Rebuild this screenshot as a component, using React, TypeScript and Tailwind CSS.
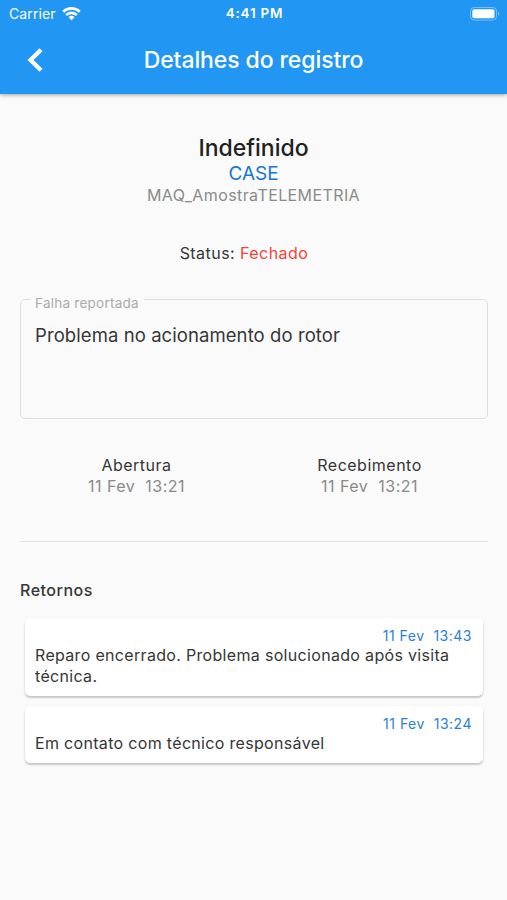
interface Feedback {
  date: string;
  message: string;
}

const feedbacks: Feedback[] = [
  { date: '11 Fev  13:43', message: 'Reparo encerrado. Problema solucionado após visita técnica.' },
  { date: '11 Fev  13:24', message: 'Em contato com técnico responsável' },
];

const dates = [
  { label: 'Abertura', value: '11 Fev  13:21' },
  { label: 'Recebimento', value: '11 Fev  13:21' },
];

function WifiIcon() {
  return (
    <svg width="19" height="14" viewBox="0 0 19 14" fill="none" stroke="currentColor" strokeWidth="2.6">
      <path d="M1.2 4.7a12 12 0 0 1 16.6 0" />
      <path d="M4.2 8a7.6 7.6 0 0 1 10.6 0" />
      <path d="M9.5 13.3 6.5 10.3a4.3 4.3 0 0 1 6 0Z" fill="currentColor" stroke="none" />
    </svg>
  );
}

function BatteryIcon() {
  return (
    <svg width="30" height="14" viewBox="0 0 30 14" fill="none">
      <rect x="0.5" y="0.5" width="26" height="12.6" rx="3.8" stroke="white" strokeOpacity="0.4" />
      <rect x="2.3" y="2.3" width="22.2" height="9" rx="1.8" fill="white" />
      <path d="M28 4.8c1.6.6 1.6 3.4 0 4Z" fill="white" fillOpacity="0.45" />
    </svg>
  );
}

function Header() {
  return (
    <header className="relative z-10 h-[94px] bg-[#2196f3] text-white shadow-[0_1px_4px_rgba(0,0,0,0.35)]">
      {/* Status bar */}
      <div className="grid h-[27px] grid-cols-3 items-center pl-[9px] pr-[7px]">
        <div className="flex items-center gap-[6px]">
          <span className="text-[14px] tracking-[0.1px]">Carrier</span>
          <WifiIcon />
        </div>
        <span className="text-center text-[13.5px] font-semibold tracking-[0.8px]">4:41 PM</span>
        <div className="flex justify-end">
          <BatteryIcon />
        </div>
      </div>
      {/* App bar */}
      <div className="grid h-[66px] grid-cols-[72px_1fr_72px] items-center">
        <button className="flex justify-center pr-[2px]" aria-label="Voltar">
          <svg width="16" height="24" viewBox="0 0 16 24" fill="none" stroke="currentColor" strokeWidth="4.2">
            <path d="M14 1.7 3.5 12 14 22.3" />
          </svg>
        </button>
        <h1 className="text-center text-[23px] font-medium tracking-[-0.1px]">Detalhes do registro</h1>
      </div>
    </header>
  );
}

function FeedbackCard({ date, message }: Feedback) {
  return (
    <div className="rounded-[5px] bg-white px-[10px] pt-[8px] pb-[9px] shadow-[0_2px_2px_rgba(0,0,0,0.2),0_0_3px_rgba(0,0,0,0.06)]">
      <p className="pr-px text-right text-[14px] leading-[19px] tracking-[0.5px] whitespace-pre text-[#2a7fd6]">{date}</p>
      <p className="text-[16px] leading-[21px] tracking-[0.32px]">{message}</p>
    </div>
  );
}

export default function App() {
  return (
    <div className="min-h-[900px] bg-[#fafafa] font-['Inter',sans-serif] text-[#363636]">
      <Header />
      <main className="pt-[40px] pr-[19px] pl-[20px]">
        <section className="pr-px text-center">
          <h2 className="text-[23px] leading-[28px] font-medium text-[#212121]">Indefinido</h2>
          <p className="text-[19px] leading-[23px] text-[#1976d2]">CASE</p>
          <p className="text-[16px] leading-[21px] tracking-[0.4px] text-[#8a8a8a]">MAQ_AmostraTELEMETRIA</p>
          <p className="mt-[37px] pr-[19px] text-[16px] leading-[20px] tracking-[0.45px]">
            Status: <span className="text-[#f44336]">Fechado</span>
          </p>
        </section>

        <div className="relative mt-[36px] h-[120px] rounded-[5px] border border-[#dedede] px-[14px] pt-[23px]">
          <span className="absolute top-[-6px] left-[9px] bg-[#fafafa] px-[5px] text-[13.5px] leading-[18px] tracking-[0.25px] text-[#aaaaaa]">
            Falha reportada
          </span>
          <p className="text-[18.5px] leading-[24px] tracking-[0.08px]">Problema no acionamento do rotor</p>
        </div>

        <div className="mt-[36px] grid grid-cols-2 pr-[2px] text-center text-[16px] leading-[21px] tracking-[0.5px]">
          {dates.map((item) => (
            <div key={item.label}>
              <p>{item.label}</p>
              <p className="whitespace-pre text-[#8a8a8a]">{item.value}</p>
            </div>
          ))}
        </div>

        <hr className="mt-[44px] border-[#e2e2e2]" />

        <h3 className="mt-[38px] text-[16px] leading-[20px] font-medium tracking-[0.5px]">Retornos</h3>
        <div className="mt-[18px] flex flex-col gap-[10px] px-[5px]">
          {feedbacks.map((feedback) => (
            <FeedbackCard key={feedback.date} {...feedback} />
          ))}
        </div>
      </main>
    </div>
  );
}
